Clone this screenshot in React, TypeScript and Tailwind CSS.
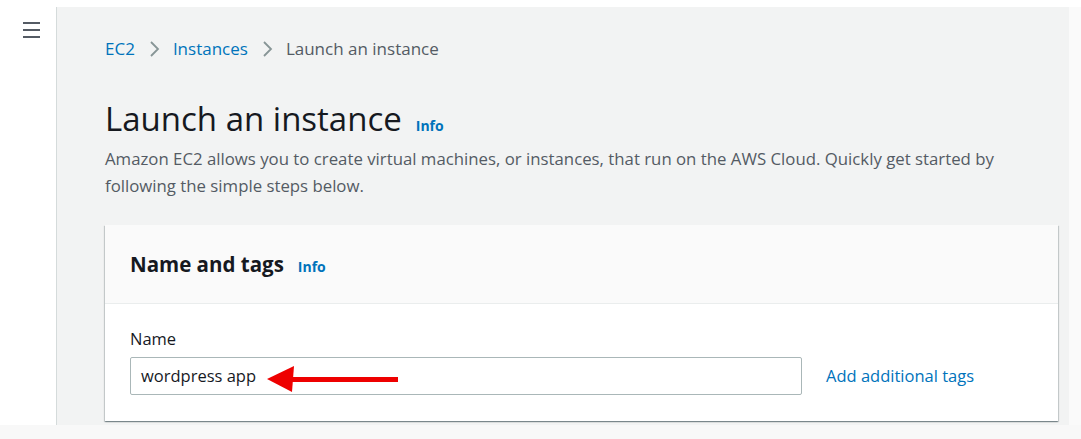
import React from "react";

const font = { fontFamily: '"Open Sans", "Noto Sans", Arial, sans-serif' };

function Chevron() {
  return (
    <svg width="14" height="18" viewBox="0 0 14 18" className="mx-[12px]">
      <path d="M4 2 L11 9 L4 16" fill="none" stroke="#879596" strokeWidth="1.8" />
    </svg>
  );
}

export default function App() {
  return (
    <div className="w-[1081px] h-[439px] bg-[#f8f8f8] flex flex-col overflow-hidden" style={font}>
      <div className="h-[7px] bg-white shrink-0" />
      <div className="flex h-[418px] shrink-0">
        <div className="w-[56px] bg-white shrink-0 pt-[15px] pl-[23px]">
          <div className="flex flex-col gap-[5px] w-[17px]">
            <div className="h-[2px] bg-[#545b64]" />
            <div className="h-[2px] bg-[#545b64]" />
            <div className="h-[2px] bg-[#545b64]" />
          </div>
        </div>
        <div className="w-[1013px] bg-[#f2f3f3] border-l border-[#d5dbdb] shrink-0 pl-[48px] pr-[11px] pt-[29px] flex flex-col">
          <div className="flex items-center h-[26px] text-[17px]">
            <span className="text-[#0073bb]">EC2</span>
            <Chevron />
            <span className="text-[#0073bb]">Instances</span>
            <Chevron />
            <span className="text-[#545b64]">Launch an instance</span>
          </div>
          <div className="flex items-baseline mt-[37px]">
            <h1 className="text-[33px] leading-[40px] text-[#16191f]">Launch an instance</h1>
            <span className="ml-[14px] text-[14px] font-bold text-[#0073bb]">Info</span>
          </div>
          <p className="mt-[6px] text-[16.8px] leading-[27px] text-[#545b64] w-[920px]">
            Amazon EC2 allows you to create virtual machines, or instances, that run on the AWS Cloud. Quickly get started by following the simple steps below.
          </p>
          <div className="mt-[26px] bg-white shadow-[0_1px_1px_0_rgba(0,28,36,0.3),1px_1px_1px_0_rgba(0,28,36,0.15),-1px_1px_1px_0_rgba(0,28,36,0.15)] flex flex-col">
            <div className="h-[79px] bg-[#fafafa] border-b border-[#eaeded] flex items-center px-[25px]">
              <span className="text-[20.5px] font-bold text-[#16191f]">Name and tags</span>
              <span className="ml-[14px] mt-[4px] text-[14px] font-bold text-[#0073bb]">Info</span>
            </div>
            <div className="px-[25px] pt-[24px] pb-[26px]">
              <div className="text-[16.5px] leading-[22px] text-[#16191f]">Name</div>
              <div className="flex items-center mt-[7px]">
                <div className="relative w-[672px] h-[38px] border border-[#aab7b8] rounded-[2px] bg-white flex items-center px-[10px] text-[16.5px] text-[#16191f]">
                  wordpress app
                  <svg className="absolute left-[136px] top-[8px]" width="132" height="28" viewBox="0 0 132 28">
                    <polygon points="0,13 27,0 25,26" fill="#ee0000" />
                    <rect x="20" y="11" width="111" height="5" fill="#ee0000" />
                  </svg>
                </div>
                <span className="ml-[24px] text-[16.5px] text-[#0073bb]">Add additional tags</span>
              </div>
            </div>
          </div>
        </div>
        <div className="flex-1 bg-[#fafafa]" />
      </div>
    </div>
  );
}
